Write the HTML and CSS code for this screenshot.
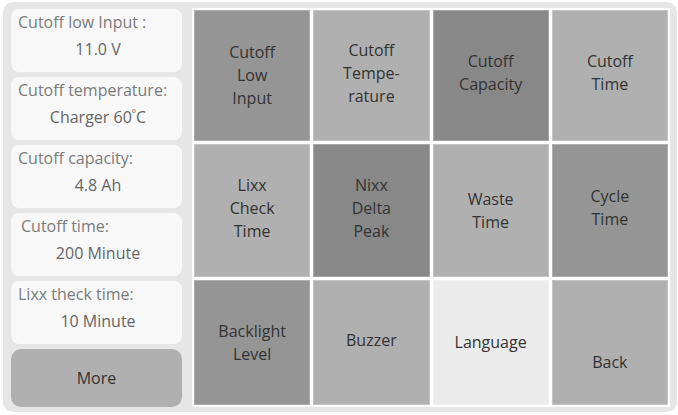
FILE: index.html
```html
<!DOCTYPE html>
<html lang="en">
<head>
  <meta charset="UTF-8" />
  <meta name="viewport" content="width=device-width, initial-scale=1.0"/>
  <title>Charger settings</title>
  <link rel="stylesheet" href="styles.css">
</head>
<body>
  <div class="panel">
    <div class="side">
      <div class="info">
        <div class="label">Cutoff low Input :</div>
        <div class="value">11.0 V</div>
      </div>
      <div class="info">
        <div class="label">Cutoff temperature:</div>
        <div class="value">Charger 60<sup>°</sup>C</div>
      </div>
      <div class="info">
        <div class="label">Cutoff capacity:</div>
        <div class="value">4.8 Ah</div>
      </div>
      <div class="info">
        <div class="label indent">Cutoff time:</div>
        <div class="value">200 Minute</div>
      </div>
      <div class="info">
        <div class="label">Lixx theck time:</div>
        <div class="value">10 Minute</div>
      </div>
      <button class="more">More</button>
    </div>

    <div class="menu">
      <div class="tile dark">Cutoff<br>Low<br>Input</div>
      <div class="tile mid up">Cutoff<br>Tempe-<br>rature</div>
      <div class="tile darker up">Cutoff<br>Capacity</div>
      <div class="tile mid up">Cutoff<br>Time</div>

      <div class="tile mid up">Lixx<br>Check<br>Time</div>
      <div class="tile darker up">Nixx<br>Delta<br>Peak</div>
      <div class="tile mid">Waste<br>Time</div>
      <div class="tile dark up">Cycle<br>Time</div>

      <div class="tile dark">Backlight<br>Level</div>
      <div class="tile mid up">Buzzer</div>
      <div class="tile light">Language</div>
      <div class="tile mid back">Back</div>
    </div>
  </div>
</body>
</html>
```

FILE: styles.css
```css
body {
  margin: 0;
  background: #ffffff;
  font-family: 'Open Sans', 'DejaVu Sans', sans-serif;
}

.panel {
  display: flex;
  gap: 10px;
  width: 674px;
  height: 410px;
  margin: 2px 0 0 3px;
  padding: 6px 7px 5px 8px;
  box-sizing: border-box;
  background: #e6e6e6;
  border-radius: 10px;
}

/* left column with current values */
.side {
  width: 171px;
  display: flex;
  flex-direction: column;
  gap: 5px;
  padding-top: 1px;
}

.info {
  height: 63px;
  box-sizing: border-box;
  padding: 2px 4px 0 7px;
  background: #f8f8f8;
  border-radius: 8px;
}

.label {
  font-size: 16px;
  line-height: 22px;
  color: #7b7b7b;
  white-space: nowrap;
}

.label.indent {
  padding-left: 3px;
}

.value {
  font-size: 16px;
  line-height: 32px;
  color: #666666;
  text-align: center;
}

.value sup {
  font-size: 10px;
  vertical-align: 6px;
  line-height: 0;
}

.more {
  flex: 1;
  border: none;
  border-radius: 10px;
  background: #b0b0b0;
  color: #333333;
  font-family: inherit;
  font-size: 16px;
  padding: 0;
}

/* settings grid */
.menu {
  flex: 1;
  display: grid;
  grid-template-columns: repeat(4, 1fr);
  grid-template-rows: 131px 133px 125px;
  gap: 3px;
  padding: 2px;
  background: #ffffff;
}

.tile {
  display: flex;
  align-items: center;
  justify-content: center;
  text-align: center;
  font-size: 16px;
  line-height: 23px;
  color: #333333;
  box-shadow: inset 0 0 0 1px rgba(255, 255, 255, 0.25);
}

.tile.up {
  padding-bottom: 5px;
}

.tile.dark { background: #959595; }
.tile.darker { background: #888888; }
.tile.mid { background: #b0b0b0; }
.tile.light { background: #ebebeb; }

.tile.back {
  padding-top: 40px;
}
```
